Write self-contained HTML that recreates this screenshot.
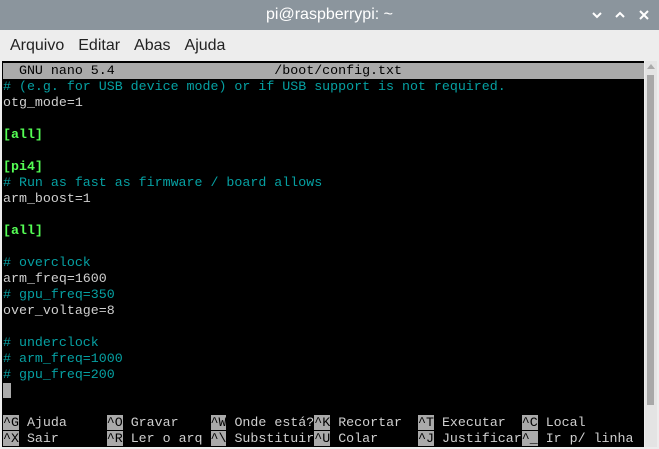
<!DOCTYPE html><html><head><style>
body{margin:0;width:659px;height:449px;overflow:hidden;background:#ededed;font-family:"Liberation Sans",sans-serif}
.tb{position:absolute;left:0;top:0;width:659px;height:30px;background:#8b959d;color:#fff;font-size:16px;text-align:center;line-height:30px}
.menu{position:absolute;top:30px;left:0;width:659px;height:31px;font-size:16px;color:#222;line-height:31px}
.menu span{margin-left:10px;margin-right:4px}
.term{position:absolute;left:2px;top:61px;width:642px;height:386px;background:#000;overflow:hidden}
pre{margin:0;margin-top:2px;font-family:"Liberation Mono",monospace;font-size:13.3px;line-height:16px;color:#cfcfcf;padding-left:1px}
.h{background:#aaa;color:#000;display:block}
.c{color:#06a0a2}.g{color:#55ff55;font-weight:bold}.k{background:#aaa;color:#000}
.sb{position:absolute;left:645px;top:61px;width:12px;height:386px;background:#e4e4e4}
.th{position:absolute;left:647px;top:75px;width:7px;height:330px;background:#a8a8a8}
</style></head><body>
<div class="tb">pi@raspberrypi: ~</div>
<svg style="position:absolute;left:585px;top:8px" width="70" height="14" viewBox="0 0 70 14" fill="none" stroke="#fff" stroke-width="2"><path d="M8 5l4 4 4-4"/><path d="M31 9l4-4 4 4"/><path d="M55 3l8 8M63 3l-8 8"/></svg>
<div class="menu"><span>Arquivo</span><span>Editar</span><span>Abas</span><span>Ajuda</span></div>
<div class="term"><pre><span class="h">  GNU nano 5.4                    /boot/config.txt                             </span><span class="c"># (e.g. for USB device mode) or if USB support is not required.</span>
otg_mode=1

<span class="g">[all]</span>

<span class="g">[pi4]</span>
<span class="c"># Run as fast as firmware / board allows</span>
arm_boost=1

<span class="g">[all]</span>

<span class="c"># overclock</span>
arm_freq=1600
<span class="c"># gpu_freq=350</span>
over_voltage=8

<span class="c"># underclock</span>
<span class="c"># arm_freq=1000</span>
<span class="c"># gpu_freq=200</span>
<span class="k"> </span>

<span class="k">^G</span> Ajuda     <span class="k">^O</span> Gravar    <span class="k">^W</span> Onde está?<span class="k">^K</span> Recortar  <span class="k">^T</span> Executar  <span class="k">^C</span> Local
<span class="k">^X</span> Sair      <span class="k">^R</span> Ler o arq <span class="k">^\</span> Substituir<span class="k">^U</span> Colar     <span class="k">^J</span> Justificar<span class="k">^_</span> Ir p/ linha</pre></div>
<div class="sb"></div><div class="th"></div>
<div style="position:absolute;left:647px;top:64px;width:0;height:0;border-left:4px solid transparent;border-right:4px solid transparent;border-bottom:5px solid #aaa"></div>
</body></html>
